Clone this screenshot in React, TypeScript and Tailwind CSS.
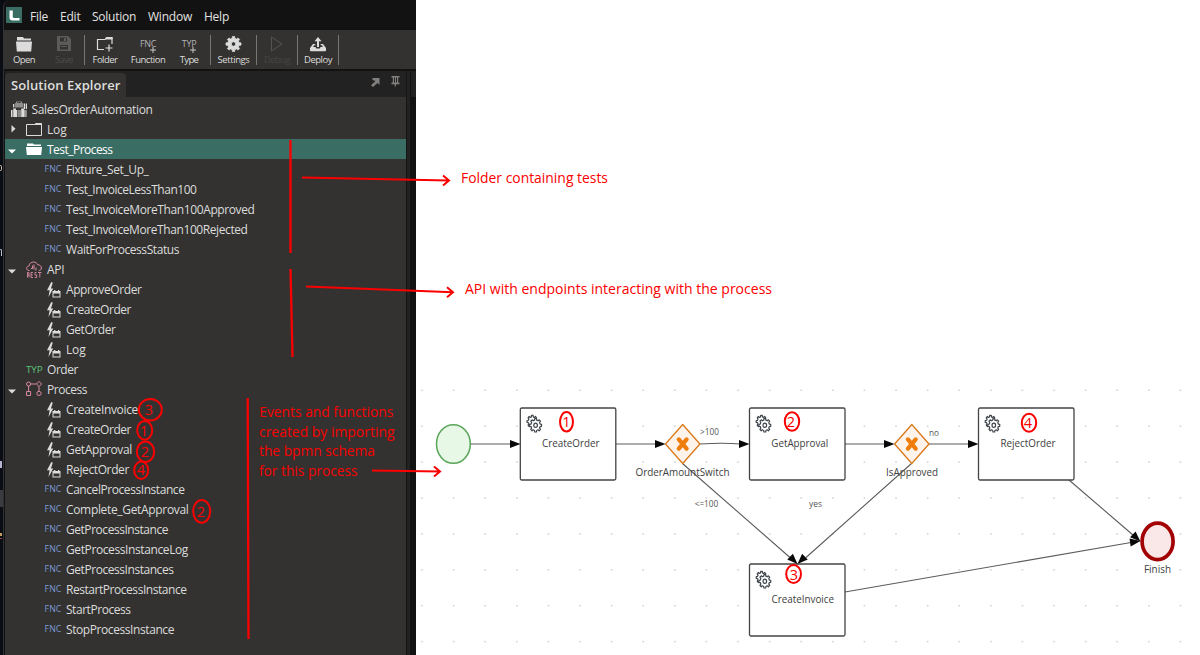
import { useLayoutEffect, useRef, useState, type ReactNode } from 'react';

const UI = "font-['Open_Sans','Noto_Sans',sans-serif]";

/** Text whose letter spacing is adjusted so that it fills the given width. */
function Fit({ text, w, className = '' }: { text: string; w: number; className?: string }) {
  const ref = useRef<HTMLSpanElement>(null);
  const [spacing, setSpacing] = useState(0);
  useLayoutEffect(() => {
    const el = ref.current;
    if (el) setSpacing((w - el.getBoundingClientRect().width) / text.length);
  }, [text, w]);
  return (
    <span ref={ref} className={`whitespace-pre ${className}`} style={{ letterSpacing: spacing }}>
      {text}
    </span>
  );
}

function gearPath(cx: number, cy: number, rx: number, ry: number, inner: number, teeth = 8) {
  const pts: string[] = [];
  const step = (Math.PI * 2) / teeth;
  for (let i = 0; i < teeth; i++) {
    const a = i * step;
    for (const [off, r] of [[-0.3, inner], [-0.19, 1], [0.19, 1], [0.3, inner]]) {
      const t = a + off * step;
      pts.push(`${(cx + Math.cos(t) * rx * r).toFixed(2)},${(cy + Math.sin(t) * ry * r).toFixed(2)}`);
    }
  }
  return `M${pts.join('L')}Z`;
}

/* ---------- toolbar ---------- */

function OpenFolder() {
  return (
    <svg className="h-4 w-4" viewBox="0 0 16 16" fill="currentColor">
      <path d="M1 4.500V1h6l1 1.500h7v2z" />
      <path d="M0 5.500h16l-.8 10H.8z" />
    </svg>
  );
}
function SaveIcon() {
  return (
    <svg className="h-4 w-4" viewBox="0 0 16 16">
      <path fill="currentColor" fillRule="evenodd" d="M1 0h11l3 3v12H1zM4 1.500v4h7v-4zM4 9v4.500h8V9z" />
      <path fill="currentColor" d="M8 2h2v3H8zM5 10h6v1H5z" />
    </svg>
  );
}
function FolderPlus() {
  return (
    <svg className="h-4 w-[18px]" viewBox="0 0 18 16" fill="none" stroke="currentColor" strokeWidth="1.2">
      <path d="M8 13.500H1.500V3.500H9L10.500 1.500h5.500V8M13 8.500v7M9.500 12h7" />
      <path d="M10.500 1h6v2.500h-7z" fill="currentColor" stroke="none" />
    </svg>
  );
}
function TextPlus({ text, w }: { text: string; w: number }) {
  return (
    <span className="relative -mt-px flex h-4 items-center text-[9px] leading-4 text-[#b0b0b0]">
      <Fit text={text} w={w} />
      <svg className="absolute right-0 bottom-[-1px] h-[6px] w-[6px]" viewBox="0 0 6 6" stroke="#c8c8c8">
        <path d="M3 0v6M0 3h6" />
      </svg>
    </span>
  );
}
function SettingsIcon() {
  return (
    <svg className="h-[18px] w-[18px]" viewBox="0 0 18 18">
      <path fill="currentColor" fillRule="evenodd" stroke="currentColor" strokeWidth=".8" strokeLinejoin="round"
        d={`${gearPath(8.500, 9, 7.600, 7.600, 0.76)}M10.700 9a2.200 2.200 0 1 0-4.400 0a2.200 2.200 0 1 0 4.400 0Z`} />
    </svg>
  );
}
function PlayIcon() {
  return (
    <svg className="h-4 w-4" viewBox="0 0 16 16" fill="none" stroke="#555453">
      <path d="M2.500 1l10.500 7L2.500 15z" />
    </svg>
  );
}
function DeployIcon() {
  return (
    <svg className="h-4 w-[17px]" viewBox="0 0 17 16" fill="currentColor">
      <path d="M8 1l3.500 4.200H9V11H7V5.200H4.500z" />
      <path d="M3 8h2.300v1.200H4L3.200 11h2.300l.8 1.500h3.400l.8-1.500h2.300l-.8-1.800h-1.300V8H13l3 4v2.500a.8.800 0 0 1-.8.800H.8a.8.800 0 0 1-.8-.800V12z" />
    </svg>
  );
}

function Tool({ icon, label, w, className = '' }: { icon: ReactNode; label: string; w: number; className?: string }) {
  return (
    <div className={`flex h-full flex-col items-center pt-[5px] text-[#dcdcdc] ${className}`}>
      <div className="flex h-[18px] items-center">{icon}</div>
      <Fit text={label} w={w} className="mt-px text-[9.500px] leading-3" />
    </div>
  );
}
const Sep = () => <div className="mt-[5px] h-[30px] w-px shrink-0 bg-[#777675]" />;

/* ---------- solution tree ---------- */

function Suitcases() {
  return (
    <svg className="h-4 w-4" viewBox="0 0 16 16">
      <path fill="#8f8e8d" fillRule="evenodd" d="M5 2V.500h6V2h1v4.500H4V2zM6 2h4v-.700H6z" />
      <path fill="#dcdcdc" d="M2 3h1.300v3.500H2zM12.700 2.500h1.300V8h-1.300zM14.700 2.500H16V8h-1.300z" />
      <path fill="#dcdcdc" d="M0 9h1.500v7H0zM2.200 9V7.500H5V9H6v7H2.200zM6.700 9h.8v7h-.8zM8.500 9h1v7h-1zM10.200 9V7.500h3V9h.5v7h-3.500zM14.400 9H15.500v7h-1.100z" />
    </svg>
  );
}
function FolderOutline() {
  return (
    <svg className="h-4 w-4" viewBox="0 0 16 16" fill="none" stroke="#dcdcdc">
      <path d="M.5 14.500V3.500H9L10 2.500h5.500v12z" />
      <path d="M9.500 2h6v2h-7z" fill="#dcdcdc" stroke="none" />
    </svg>
  );
}
function FolderFull() {
  return (
    <svg className="h-4 w-4" viewBox="0 0 16 16" fill="#fff">
      <path d="M1 5V2.500h6l1 1h7V5z" />
      <path d="M0 6h16l-.8 8H.8z" />
    </svg>
  );
}
function RestCloud() {
  return (
    <svg className="h-[17px] w-4" viewBox="0 0 16 17" fill="none" stroke="#d98aa6">
      <path d="M3.500 9.500C1 9.500 0 8 .8 6.500 1.200 5.500 2 5.200 3 5 3.500 2.300 5.200 1 7.500 1c2 0 3.500 1 4 2.700C14 3.800 15.400 5 15.400 7c0 1.500-1 2.500-2.600 2.500M5 7.500h1.500V4.500M8 3.500v5M10 9.500V6.500" />
      <path strokeWidth=".9" d="M1.500 16.500v-5h1.500v2.500H1.500M3 14v2.500M7 11.500H5v5h2M5 14h1.700M10.500 11.500H9V14h1.700v2.500H8.700M12 11.500h3.500M13.800 11.500V16.500" />
    </svg>
  );
}
function FlowIcon() {
  return (
    <svg className="h-4 w-4" viewBox="0 0 16 16" fill="none" stroke="#d98aa6">
      <circle cx="2.600" cy="3" r="2" />
      <path d="M13 .4l2.600 2.600-2.600 2.600L10.400 3zM4.600 3h5.800M2.600 5v5.500M13 5.600v4.900M.6 10.500h4v4h-4z" />
      <ellipse cx="13" cy="12.400" rx="2.200" ry="2" />
    </svg>
  );
}
function EventIcon() {
  return (
    <svg className="h-4 w-[14px]" viewBox="0 0 14 16">
      <path fill="#dcdcdc" d="M4.300 0L0 8.200h2.600L1.500 15l4.700-8.600H3.900L5.800.8z" />
      <path fill="#dcdcdc" d="M5.500 9H7V8h1.300v1H11V8h1.300v1H13.500v6.500h-8z" />
      <path fill="#333230" d="M6.500 11.500h6v3h-6z" />
    </svg>
  );
}

type Kind = 'root' | 'log' | 'open' | 'fnc' | 'rest' | 'event' | 'typ' | 'flow';
const icons: Record<Kind, ReactNode> = {
  root: <Suitcases />,
  log: <FolderOutline />,
  open: <FolderFull />,
  rest: <RestCloud />,
  flow: <FlowIcon />,
  event: <EventIcon />,
  fnc: <Fit text="FNC" w={17} className="text-[8.800px] text-[#7d99d4]" />,
  typ: <Fit text="TYP" w={16.500} className="text-[9.800px] text-[#5cc27c]" />,
};
const pads: Record<Kind, string> = {
  root: 'w-[26.500px] pl-[6px]',
  log: 'w-[26px] pl-[5px]',
  open: 'w-[26px] pl-[5px]',
  rest: 'w-[26px] pl-[5px]',
  flow: 'w-[26px] pl-[5px]',
  typ: 'w-[26px] pl-[5px] pt-[2px]',
  event: 'w-[45px] pl-[26px] pt-[2px]',
  fnc: 'w-[45px] pl-[23.500px] pt-[2px]',
};

const rows: [Kind, string, number][] = [
  ['root', 'SalesOrderAutomation', 121],
  ['log', 'Log', 19.500],
  ['open', 'Test_Process', 65.500],
  ['fnc', 'Fixture_Set_Up_', 82.500],
  ['fnc', 'Test_InvoiceLessThan100', 130.500],
  ['fnc', 'Test_InvoiceMoreThan100Approved', 188.500],
  ['fnc', 'Test_InvoiceMoreThan100Rejected', 181.500],
  ['fnc', 'WaitForProcessStatus', 113],
  ['rest', 'API', 17.500],
  ['event', 'ApproveOrder', 75.500],
  ['event', 'CreateOrder', 65],
  ['event', 'GetOrder', 49.500],
  ['event', 'Log', 19.500],
  ['typ', 'Order', 31],
  ['flow', 'Process', 40],
  ['event', 'CreateInvoice', 72],
  ['event', 'CreateOrder', 65],
  ['event', 'GetApproval', 66],
  ['event', 'RejectOrder', 63],
  ['fnc', 'CancelProcessInstance', 118.500],
  ['fnc', 'Complete_GetApproval', 122.500],
  ['fnc', 'GetProcessInstance', 102],
  ['fnc', 'GetProcessInstanceLog', 122],
  ['fnc', 'GetProcessInstances', 107.500],
  ['fnc', 'RestartProcessInstance', 120.500],
  ['fnc', 'StartProcess', 64.500],
  ['fnc', 'StopProcessInstance', 108],
];

function Row({ kind, label, w }: { kind: Kind; label: string; w: number }) {
  const selected = kind === 'open';
  const open = selected || kind === 'rest' || kind === 'flow';
  return (
    <div className={`flex h-5 shrink-0 items-center ${selected ? 'bg-[#3a6d63] text-white' : 'text-[#dcdcdc]'}`}>
      {kind !== 'root' && (
        <svg className={`h-2 w-4 shrink-0 ${open ? 'mt-[3px]' : ''}`} viewBox="0 0 16 8" fill="currentColor">
          {open && <path d="M3 2.500h8L7 6.500z" />}
          {kind === 'log' && <path d="M6.500 0v7.500L10.500 3.700z" />}
        </svg>
      )}
      <div className={`flex h-full shrink-0 items-center ${pads[kind]}`}>{icons[kind]}</div>
      <Fit text={label} w={w} className="mt-[2px] text-[12px] leading-5" />
    </div>
  );
}

/* ---------- process diagram ---------- */

function Arrow({ x, y, angle }: { x: number; y: number; angle: number }) {
  return <path d="M0 0L-10.500 -4V4Z" fill="#080808" transform={`translate(${x} ${y}) rotate(${angle})`} />;
}
function Label({ x, y, w, size = 11, children }: { x: number; y: number; w: number; size?: number; children: string }) {
  return (
    <text x={x} y={y} fontSize={size} textLength={w} lengthAdjust="spacingAndGlyphs" fill={size < 10 ? '#555' : '#404040'}>
      {children}
    </text>
  );
}
function Task({ x, y }: { x: number; y: number }) {
  return (
    <g transform={`translate(${x} ${y})`}>
      <rect width="95.500" height="72" rx="1.500" fill="#fff" stroke="#444" strokeWidth="1.300" />
      <g fill="#fff" stroke="#41464c" strokeWidth="1.200" strokeLinejoin="round">
        <path d={gearPath(12, 13.500, 5.300, 6.200, 0.76)} />
        <path d={gearPath(15.300, 17.300, 6, 6.800, 0.78)} />
        <ellipse cx="15.300" cy="17.300" rx="1.800" ry="2.100" />
      </g>
    </g>
  );
}
function Gateway({ x }: { x: number }) {
  return (
    <g transform={`translate(${x} 444)`}>
      <path d="M0-19.500L17.200 0L0 19.500L-17.200 0Z" fill="#fef3ea" stroke="#d9791a" strokeWidth="1.300" strokeLinejoin="round" />
      <path d="M-3.900-4.600L3.900 4.600M3.900-4.600L-3.900 4.600" stroke="#ee7d0c" strokeWidth="4.200" strokeLinecap="round" />
    </g>
  );
}

const dots = Array.from({ length: 200 }, (_, i) => [422 + (i % 25) * 31.600, 390.300 + Math.floor(i / 25) * 35.900]);

function Diagram() {
  return (
    <svg className={`absolute inset-0 h-[655px] w-[1200px] ${UI}`} viewBox="0 0 1200 655">
      {dots.map(([x, y]) => (
        <rect key={`${x}-${y}`} x={x - 0.8} y={y - 0.7} width="1.700" height="1.400" fill="#d2d2d2" />
      ))}
      <g stroke="#5c5c5c" strokeWidth="1.100" fill="none">
        <path d="M471 444H512M616 444H658M845 444H886M929 444H970" />
        <path d="M700 444C712 443.300 728 443 740 444" />
        <path d="M682.500 463.500L790 557.500M911.500 463.500L806 557.500" />
        <path d="M1069 480L1133 535M845 592L1131 542.500" />
      </g>
      <Task x={520.300} y={408} />
      <Task x={749.500} y={408} />
      <Task x={978.500} y={408} />
      <Task x={749.500} y={564} />
      <Arrow x={520.500} y={444} angle={0} />
      <Arrow x={665.500} y={444} angle={0} />
      <Arrow x={749.500} y={444} angle={0} />
      <Arrow x={894.500} y={444} angle={0} />
      <Arrow x={978.500} y={444} angle={0} />
      <Arrow x={797.500} y={564} angle={45} />
      <Arrow x={797.500} y={564} angle={135} />
      <Arrow x={1140.500} y={541.500} angle={43} />
      <Arrow x={1140.500} y={541} angle={-8} />
      <Gateway x={682.700} />
      <Gateway x={911.800} />
      <ellipse cx="453.400" cy="444" rx="16.900" ry="19.300" fill="#e8f8e6" stroke="#58a558" strokeWidth="1.500" />
      <ellipse cx="1157.600" cy="541.400" rx="15.500" ry="18.200" fill="#fae8e8" stroke="#a30205" strokeWidth="3.700" />
      <Label x={542} y={447.400} w={57.500}>CreateOrder</Label>
      <Label x={771.300} y={447.400} w={57}>GetApproval</Label>
      <Label x={1000.500} y={447.400} w={55}>RejectOrder</Label>
      <Label x={771.500} y={603.400} w={62.500}>CreateInvoice</Label>
      <Label x={635.500} y={475.500} w={94}>OrderAmountSwitch</Label>
      <Label x={886} y={475.500} w={52}>IsApproved</Label>
      <Label x={1144} y={573.300} w={27}>Finish</Label>
      <Label x={700} y={434.800} w={19} size={8.500}>&gt;100</Label>
      <Label x={694.700} y={506.700} w={23.500} size={8.500}>&lt;=100</Label>
      <Label x={929} y={435.600} w={10} size={8.500}>no</Label>
      <Label x={809} y={506.700} w={13} size={8.500}>yes</Label>
    </svg>
  );
}

/* ---------- red pen notes ---------- */

const marks: [string, number, number, number, number, number, number][] = [
  ['3', 150.300, 409.700, 11.500, 10.700, 149, 415.300],
  ['1', 144.700, 430.300, 7.500, 9.400, 143.800, 435.600],
  ['2', 145.500, 451.700, 8.700, 10.200, 145, 457.300],
  ['4', 141.200, 470.200, 7, 8.700, 141, 475.300],
  ['2', 201.700, 511.300, 8.500, 11.400, 201, 517],
  ['1', 566.500, 421.800, 6.500, 9.700, 566.300, 427],
  ['2', 792, 421.500, 7.200, 9.300, 791, 426.600],
  ['4', 1029, 422.800, 7.200, 9, 1028, 427.500],
  ['3', 793.600, 574, 7.400, 8.900, 794, 580],
];
const notes: [string, number, number, number][] = [
  ['Folder containing tests', 461, 183, 147],
  ['API with endpoints interacting with the process', 465, 294, 307],
  ['Events and functions', 259.300, 417, 134],
  ['created by importing', 259, 437, 135.500],
  ['the bpmn schema', 259, 456, 116],
  ['for this process', 259, 476, 98.500],
];

function Notes() {
  return (
    <svg className="absolute inset-0 h-[655px] w-[1200px] font-['Open_Sans','Noto_Sans',sans-serif]" viewBox="0 0 1200 655">
      <g fill="none" stroke="#fb0000" strokeWidth="2">
        <path d="M290.500 140V253M290.500 269L292.500 357M247.700 398L248.500 639" strokeWidth="2.300" />
        <path d="M302 177.500L449 180.500M443 175.500L449 180.500L443 185.500" />
        <path d="M306 286.500L453 292.300M447 287.300L453 292.300L447 297.300" />
        <path d="M372 470.500L440 471.500M434 466.500L440 471.500L434 476.500" />
        {marks.map(([d, cx, cy, rx, ry]) => (
          <ellipse key={`${d}-${cx}-${cy}`} cx={cx} cy={cy} rx={rx} ry={ry} />
        ))}
      </g>
      <g fill="#fb0000">
        {marks.map(([d, cx, , , , tx, ty]) => (
          <text key={`${d}-${cx}-${ty}`} x={tx} y={ty} fontSize="14.500" textAnchor="middle">{d}</text>
        ))}
        {notes.map(([t, x, y, w]) => (
          <text key={t} x={x} y={y} fontSize="14" textLength={w} lengthAdjust="spacingAndGlyphs">{t}</text>
        ))}
      </g>
    </svg>
  );
}

const menu: [string, number, string][] = [
  ['File', 18, 'ml-2'],
  ['Edit', 20.500, 'ml-3'],
  ['Solution', 44, 'ml-[11.500px]'],
  ['Window', 44, 'ml-3'],
  ['Help', 25, 'ml-3'],
];

export default function App() {
  return (
    <main className={`relative flex h-[655px] w-[1200px] overflow-hidden bg-white ${UI}`}>
      <aside className="flex h-full w-[416px] bg-[#0a0d14]">
        <div className="flex w-[3px] shrink-0 flex-col overflow-hidden">
          <span className="mt-[165px] h-[6px] w-[2px] rounded-r-full border-y border-r border-[#c9b9a0]" />
          <span className="mt-[78px] h-[7px] w-[2px] rounded-tr-full border-t border-r border-[#b9c4d0]" />
          <span className="mt-[205px] h-[7px] w-[2px] bg-[#b8b4d0]" />
          <span className="mt-[22px] h-[17px] bg-[#3a3b3e]" />
          <span className="mt-[26px] h-[3px] w-[2px] bg-[#c39a62]" />
          <span className="mt-[2px] h-px w-[2px] bg-[#9c4a4a]" />
        </div>
        <div className="flex min-w-0 flex-1 flex-col overflow-hidden rounded-tl-[7px] border-l border-[#303134] bg-[#121212]">
          <header className="flex h-[30px] shrink-0 items-center pl-[2px]">
            <div className="flex h-4 w-4 items-center justify-center bg-[#3a6d63]">
              <svg className="h-[11px] w-[11px]" viewBox="0 0 11 11">
                <path d="M.5 .500h3.300v6.200c0 .800.300 1.200 1.200 1.200h5.500v2.600H3.700C1.500 10.500.500 9.500.500 7.500z" fill="#fff" />
              </svg>
            </div>
            {menu.map(([t, w, m]) => (
              <Fit key={t} text={t} w={w} className={`mt-[3px] text-[12px] text-[#e2e2e2] ${m}`} />
            ))}
          </header>
          <nav className="flex h-[39px] shrink-0 bg-[#333230]">
            <Tool className="w-10" icon={<OpenFolder />} label="Open" w={22} />
            <Tool className="w-10 !text-[#4c4b4a]" icon={<span className="mr-px text-[#5c5b5a]"><SaveIcon /></span>} label="Save" w={18} />
            <Sep />
            <Tool className="w-10" icon={<FolderPlus />} label="Folder" w={25} />
            <Tool className="w-[46px]" icon={<TextPlus text="FNC" w={16} />} label="Function" w={34.500} />
            <Tool className="mr-[3px] w-9" icon={<TextPlus text="TYP" w={14.500} />} label="Type" w={18.500} />
            <Sep />
            <Tool className="w-[45px]" icon={<SettingsIcon />} label="Settings" w={32} />
            <Sep />
            <Tool className="w-10 !text-[#454443]" icon={<PlayIcon />} label="Debug" w={26} />
            <Sep />
            <Tool className="w-10" icon={<DeployIcon />} label="Deploy" w={28} />
            <Sep />
          </nav>
          <div className="flex min-h-0 flex-1 pt-[2px]">
            <section className="ml-px flex w-[402px] flex-col border-r border-[#141414] bg-[#333230]">
              <div className="flex h-[26px] shrink-0 items-start bg-[#222]">
                <div className="mt-[2px] flex h-6 w-[121px] items-center rounded-t-[4px] bg-[#333230] pt-px pl-[6px]">
                  <Fit text="Solution Explorer" w={109.500} className="text-[13px] font-semibold text-[#dedede]" />
                </div>
                <svg className="mt-[7px] ml-[245px] h-[9px] w-[9px]" viewBox="0 0 9 9">
                  <path d="M1.500 0H8.500V7L6.500 5L2 9L0 7.200L4.500 3L1.500 2z" fill="#827f7d" />
                </svg>
                <svg className="mt-[5px] ml-[11px] h-[12px] w-[9px]" viewBox="0 0 9 12">
                  <path d="M.500 0h8v1.500H7.200V6.500h1.300v1.700H5.300L4 11.500L3.500 8.200H.500V6.500h1.300V1.500h-1.300zM3 1.500V6.500h1V1.500zM5 1.500V6.500h1V1.500z" fillRule="evenodd" fill="#827f7d" />
                </svg>
              </div>
              <div className="flex flex-1 flex-col pt-[2px]">
                {rows.map(([kind, label, w], i) => (
                  <Row key={i} kind={kind} label={label} w={w} />
                ))}
              </div>
            </section>
            <div className="w-[3px] bg-[#222]" />
            <div className="ml-px h-[26px] flex-1 bg-[#222]" />
          </div>
        </div>
      </aside>
      <Diagram />
      <Notes />
    </main>
  );
}
